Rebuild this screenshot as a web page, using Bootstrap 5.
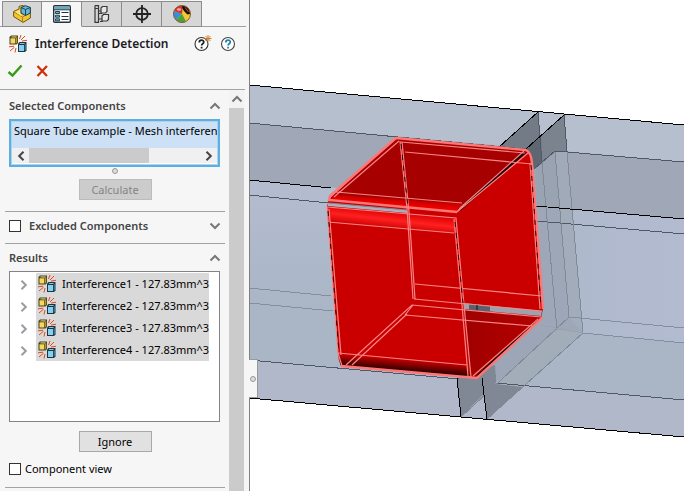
<!DOCTYPE html>
<html lang="en">
<head>
<meta charset="utf-8">
<meta name="viewport" content="width=device-width, initial-scale=1">
<title>Interference Detection</title>
<link href="https://cdn.jsdelivr.net/npm/bootstrap@5.3.0/dist/css/bootstrap.min.css" rel="stylesheet">
<style>
body{font:11px/16px "Noto Sans","Open Sans",sans-serif;color:#000;background:#fff}
svg{display:block}
button{font:inherit;color:inherit}
h1,h2{font-size:11px;line-height:16px;font-weight:600;margin:0}
h1{font-size:12px;color:#1c1c24}
h2{color:#444}
.pm{width:250px;background:#f6f6f6;border-right:1px solid #808080}
.pm-tabs{padding:1px 0 0 2px;box-shadow:inset 0 -1px #a0a0a0;margin-right:3px}
.pm-tab{width:40px;height:26px;background:#d6d6d6;border:1px solid #8c8c8c;border-left-width:0;padding:0}
.pm-tab:first-child{border-left-width:1px}
.pm-tab.on{background:#f6f6f6;border-bottom-color:#f6f6f6}
.plain{background:none;border:0;padding:0}
.pm-title{height:34px;padding:0 13px 0 9px}
.pm-ok{height:28px;padding:0 7px 8px;gap:12px}
.pm-line{border-top:1px solid #a3a3a3}
.pm-body{min-width:0}
.sec{margin:0 4px 0 5px;padding:0 4px;border-bottom:1px solid #a3a3a3}
.sec-head{height:27px}
.sec-first{padding-bottom:11px}
.sec-first .sec-head{height:29px;padding-top:3px}
.sec-last{padding-bottom:10px}
.selbox{border:2px solid #5eaee0;outline:1px solid #a8d6f2;outline-offset:-3px;background:#fff;height:48px;padding:1px;margin-right:1px}
.seltext{background:#cce1f5;height:26px;line-height:18px;white-space:nowrap;overflow:hidden;padding-left:2px}
.hbar{height:15px;background:#f0f0f0;color:#444}
.hbar button{width:17px}
.hthumb{width:120px;background:#cbcbcb}
.grip{width:6px;height:6px;border:1px solid #999;background:#ddd;border-radius:50%}
.grip-row{margin:1px auto 5px}
.cmd{display:block;margin:0 auto;width:73px;height:21px;line-height:17px;border:1px solid #a8a8a8;background:#e1e1e1;padding:0}
.cmd:disabled{background:#ccc;border-color:#bcbcbc;color:#858585}
.cmd-last{margin-bottom:9px}
.tick{appearance:none;width:12px;height:12px;border:1px solid #333;background:#fff;margin:0;border-radius:0}
.tick:checked{background:#2779b8}
.tree{height:151px;border:1px solid #83838b;background:#fff;padding:1px 10px 0;margin:0 1px 9px 0}
.tree li{height:22px}
.tree button{width:16px;margin-top:2px;flex-shrink:0}
.node{background:#d9d9d9;height:22px;padding-left:2px;gap:6px;flex:1}
.vbar{width:15px;background:#cbcbcb;margin-right:5px;flex-shrink:0}
.vbar button{height:18px;background:#f3f3f3}
.handle{left:-1px;top:359px;width:9px;height:39px;background:#f6f6f6;border:1px solid #999;border-left:0;padding:0}
.scene{min-width:0}
</style>
<script src="https://cdn.jsdelivr.net/npm/bootstrap@5.3.0/dist/js/bootstrap.bundle.min.js"></script>
</head>
<body>
<svg width="0" height="0" class="position-absolute" aria-hidden="true">
<defs>
<symbol id="clash" viewBox="0 0 18 18">
<path d="M.5 2 2 .5H9V8L7.5 9.5H.5Z" fill="#4a3f18"/><path d="M1.5 3.3H6.3V8.5H1.5Z" fill="#f6d75e"/><path d="M2 2.3 2.8 1.5H7.8L7 2.4Z" fill="#fff0a0"/><path d="M7.2 3 8.2 2.1V7.5L7.2 8.4Z" fill="#d9ac2f"/>
<path d="M9 8.5 10.5 7H17.5V15.5L16 17H9Z" fill="#173746"/><path d="M10 10H15V16H10Z" fill="#86d0ee"/><path d="M10.5 9 11.3 8.2H16L15.2 9Z" fill="#c4edfb"/><path d="M15.8 9.7 16.6 9V15L15.8 15.8Z" fill="#4c9fc0"/>
<path d="M10.5 4 12 0M12 5 16 1M13 6 18 5.3M0 11.8 5 11.2M1 16 5.5 12.2M6 17.5 7 13" stroke="#dc4b25" fill="none"/>
</symbol>
<symbol id="up" viewBox="0 0 12 8"><path d="M1.5 6.5 6 2 10.5 6.5" fill="none" stroke="#777" stroke-width="2"/></symbol>
<symbol id="right" viewBox="0 0 8 12"><path d="M1.5 1.8 5.8 6 1.5 10.2" fill="none" stroke="currentColor" stroke-width="2"/></symbol>
</defs>
</svg>
<div class="d-flex min-vh-100">
<aside class="pm d-flex flex-column flex-shrink-0">
<nav class="pm-tabs d-flex" aria-label="Manager tabs">
<button class="pm-tab d-flex align-items-center justify-content-center" aria-label="Feature tree"><svg width="18" height="18" viewBox="0 0 18 18"><path d="M.6 6.5 6 4V1.5L9 .5 17.4 3V13L10 17.4.6 11.5Z" fill="#f0c530" stroke="#71581a"/><path d="M1 7 9.5 12V17M9.5 12 17 8" fill="none" stroke="#a8841c"/><path d="M2 6.8 7 4.7V8.5L9.5 11 8 11Z" fill="#ffe579"/><path d="M8 2.5 12.5.7 17.3 2.5V8L12.5 10.5 8 8Z" fill="#68b5d6" stroke="#174558"/><path d="M8 2.5 12.5 4.5 17.3 2.5M12.5 4.5V10" stroke="#174558" fill="none"/></svg></button>
<button class="pm-tab on d-flex align-items-center justify-content-center" aria-label="Properties"><svg width="18" height="18" viewBox="0 0 18 18"><rect x=".7" y=".7" width="16.6" height="16.6" rx="1" fill="#fff" stroke="#26333b" stroke-width="1.4"/><path d="M1.4 1.4H16.6V4.5H1.4Z" fill="#68a7c3"/><path d="M1 4.8H17" stroke="#26333b"/><path d="M2.5 6.5H6.5V8.5H2.5ZM2.5 10.2H6.5V12.2H2.5ZM2.5 13.8H6.5V15.8H2.5Z" fill="#5bbbe1" stroke="#26424d"/><path d="M8.5 7.5H15.5M8.5 11.5H15.5M8.5 14.5H15.5" stroke="#26333b"/></svg></button>
<button class="pm-tab d-flex align-items-center justify-content-center" aria-label="Configurations"><svg width="16" height="18" viewBox="0 0 16 18" fill="none" stroke="#383838" stroke-width="1.2"><path d="M1 .6H4.5V17.4H1V.6M1 3.5H4.5M4.5 6H7M4.5 14H8"/><path d="M7 3 8.5 1.5H13V6.5L11.5 8H7ZM8 11 9.5 9.5H14.5V14.5L13 16H8Z" fill="#e6e6e6"/><path d="M5 8.5H8M6 16.5H9"/></svg></button>
<button class="pm-tab d-flex align-items-center justify-content-center" aria-label="Dimensions"><svg width="18" height="18" viewBox="0 0 18 18" fill="none" stroke="#222" stroke-width="1.8"><circle cx="9" cy="9" r="5.8"/><path d="M9 0V18M0 9H18"/></svg></button>
<button class="pm-tab d-flex align-items-center justify-content-center" aria-label="Appearances"><svg width="18" height="18" viewBox="0 0 18 18"><circle cx="9" cy="9" r="8.5" fill="#f2c934"/><path d="M9 9 1 6A8.5 8.5 0 0 1 10 .5Z" fill="#d9302c"/><path d="M9 9 1 6A8.5 8.5 0 0 0 3 15Z" fill="#348fdd"/><path d="M9 9 3 15A8.5 8.5 0 0 0 13 16.5Z" fill="#49a33d"/><path d="M9 1 12 1Q17 3 17 9L14.5 9.5Q9 5 9 1Z" fill="#111"/><path d="M12 2.5 15.5 7" stroke="#b5423a" stroke-width="1.2"/><ellipse cx="6" cy="4.5" rx="2.3" ry="1.3" fill="#fff" opacity=".6"/><circle cx="9" cy="9" r="8.5" fill="none" stroke="#8a5a3b"/></svg></button>
</nav>
<header class="pm-title d-flex align-items-center">
<svg width="18" height="18" class="me-2 flex-shrink-0"><use href="#clash"/></svg><h1 class="me-auto text-nowrap">Interference Detection</h1>
<button class="plain me-2" aria-label="What's new"><svg width="18" height="18" viewBox="0 0 18 18"><circle cx="7.5" cy="9" r="6.5" fill="#fff" stroke="#333" stroke-width="1.1"/><path d="M5.3 7.4C5.3 4.5 9.8 4.4 9.8 7.1 9.8 8.8 7.6 8.8 7.6 10.5M7.6 11.7V13.4" fill="none" stroke="#222" stroke-width="1.8"/><path d="M14 0V7M10.5 3.5H17.5M11.5 1 16.5 6M16.5 1 11.5 6" stroke="#ce812f"/></svg></button>
<button class="plain" aria-label="Help"><svg width="16" height="18" viewBox="0 0 16 18"><circle cx="8" cy="9" r="6.5" fill="#fff" stroke="#444" stroke-width="1.1"/><path d="M5.8 7.4C5.8 4.5 10.3 4.4 10.3 7.1 10.3 8.8 8.1 8.8 8.1 10.5M8.1 11.7V13.4" fill="none" stroke="#2380ad" stroke-width="1.8"/></svg></button>
</header>
<div class="pm-ok d-flex align-items-center">
<button class="plain" aria-label="OK"><svg width="16" height="14" viewBox="0 0 16 14"><path d="M1.5 8 5.5 11.5 14.5 1.5" fill="none" stroke="#3a9a19" stroke-width="2.4"/></svg></button>
<button class="plain" aria-label="Cancel"><svg width="14" height="14" viewBox="0 0 14 14"><path d="M2.5 2 12 12M12 2 2.5 12" stroke="#cc2f0c" stroke-width="2.2"/></svg></button>
</div>
<div class="pm-line me-1"></div>
<div class="d-flex flex-grow-1">
<div class="pm-body flex-grow-1">
<section class="sec sec-first">
<div class="sec-head d-flex align-items-center justify-content-between"><h2>Selected Components</h2><button class="plain" aria-label="Collapse Selected Components"><svg width="12" height="8"><use href="#up"/></svg></button></div>
<div class="selbox"><div class="seltext">Square Tube example - Mesh interference</div>
<div class="hbar d-flex"><button class="plain d-flex align-items-center justify-content-center" aria-label="Scroll left"><svg width="8" height="12"><use href="#right" transform="rotate(180 4 6)"/></svg></button><span class="hthumb me-auto"></span><button class="plain d-flex align-items-center justify-content-center" aria-label="Scroll right"><svg width="8" height="12"><use href="#right"/></svg></button></div></div>
<div class="grip grip-row"></div>
<button class="cmd" disabled>Calculate</button>
</section>
<section class="sec pb-1">
<div class="sec-head d-flex align-items-center"><input class="tick me-2" type="checkbox" id="excl"><h2 class="me-auto"><label for="excl">Excluded Components</label></h2><button class="plain" aria-label="Expand Excluded Components"><svg width="12" height="8"><use href="#up" transform="rotate(180 6 4)"/></svg></button></div>
</section>
<section class="sec sec-last">
<div class="sec-head d-flex align-items-center justify-content-between"><h2>Results</h2><button class="plain" aria-label="Collapse Results"><svg width="12" height="8"><use href="#up"/></svg></button></div>
<ul class="tree list-unstyled">
<li class="d-flex"><button class="plain text-secondary" aria-label="Expand Interference1"><svg width="8" height="12" opacity=".7"><use href="#right"/></svg></button><span class="node d-flex align-items-center text-nowrap"><svg class="flex-shrink-0" width="18" height="18"><use href="#clash"/></svg>Interference1 - 127.83mm^3</span></li>
<li class="d-flex"><button class="plain text-secondary" aria-label="Expand Interference2"><svg width="8" height="12" opacity=".7"><use href="#right"/></svg></button><span class="node d-flex align-items-center text-nowrap"><svg class="flex-shrink-0" width="18" height="18"><use href="#clash"/></svg>Interference2 - 127.83mm^3</span></li>
<li class="d-flex"><button class="plain text-secondary" aria-label="Expand Interference3"><svg width="8" height="12" opacity=".7"><use href="#right"/></svg></button><span class="node d-flex align-items-center text-nowrap"><svg class="flex-shrink-0" width="18" height="18"><use href="#clash"/></svg>Interference3 - 127.83mm^3</span></li>
<li class="d-flex"><button class="plain text-secondary" aria-label="Expand Interference4"><svg width="8" height="12" opacity=".7"><use href="#right"/></svg></button><span class="node d-flex align-items-center text-nowrap"><svg class="flex-shrink-0" width="18" height="18"><use href="#clash"/></svg>Interference4 - 127.83mm^3</span></li>
</ul>
<button class="cmd cmd-last">Ignore</button>
<div class="d-flex align-items-center gap-1"><input class="tick" type="checkbox" id="compview"><label for="compview">Component view</label></div>
</section>
</div>
<div class="vbar"><button class="plain w-100 d-flex align-items-center justify-content-center" aria-label="Scroll up"><svg width="12" height="8"><use href="#up"/></svg></button></div>
</div>
</aside>
<main class="scene flex-grow-1 position-relative">
<svg class="w-100 h-auto" viewBox="250 0 434 491" role="img" aria-label="Square tube with interference volume">
<defs>
<linearGradient id="wall" x2="0" y2="1"><stop stop-color="#b3bdcf"/><stop offset="1" stop-color="#a9b4c5"/></linearGradient>
<linearGradient id="wallR"><stop stop-color="#adb7c9"/><stop offset="1" stop-color="#b2bbd0"/></linearGradient>
<linearGradient id="topR" gradientUnits="userSpaceOnUse" x1="395" y1="195" x2="394" y2="208"><stop stop-color="#a80000"/><stop offset=".8" stop-color="#f20000"/></linearGradient>
<linearGradient id="bandR" gradientUnits="userSpaceOnUse" x1="392" y1="211" x2="390" y2="229"><stop stop-color="#dc0000"/><stop offset=".5" stop-color="#ff2020"/><stop offset="1" stop-color="#ca0000"/></linearGradient>
<linearGradient id="botR" gradientUnits="userSpaceOnUse" x1="400" y1="359" x2="399" y2="371"><stop stop-color="#c80000"/><stop offset="1" stop-color="#250000"/></linearGradient>
<linearGradient id="floorR"><stop stop-color="#a00000"/><stop offset="1" stop-color="#b50000"/></linearGradient>
</defs>
<path d="M249 85 684 125V437L249 398Z" fill="#b6bfce"/>
<path d="M249 123 684 162V219L249 180Z" fill="#a0a7b7"/>
<path d="M249 180 500 203V326L249 303Z" fill="url(#wall)"/>
<path d="M500 203 684 219V343L500 326Z" fill="url(#wallR)"/>
<path d="M249 303 684 343V400L249 360Z" fill="#aab5c6"/>
<path d="M249 360 684 400V437L249 398Z" fill="#b0b8ca"/>
<!-- tube end walls -->
<path d="M535 168 555 151 567 152 583 333 523 387 496 383 460 380 542 310Z" fill="#98a2b0" opacity=".75"/>
<path d="M555 152 567 152 583 333 569 317Z" fill="#a6b1be" opacity=".5"/>
<path d="M499 147 538 112 542 163 533 169 526 150Z" fill="#737b86"/>
<path d="M526 149 564 115 567 152H555L535 169Z" fill="#7b838f"/>
<path d="M526 149 541 136 542 163 534 169Z" fill="#5e6672"/>
<path d="M538 112 564 115 541 136Z" fill="#b8c0cf"/>
<path d="M457 378 495 365 496 383 461 417Z" fill="#818895"/>
<path d="M482 378 496 384 523 387 487 419Z" fill="#818895"/>
<path d="M484 394 461 417 487 419Z" fill="#b0b8ca"/>
<path d="M496 383 557 330 583 333 523 387Z" fill="#a3adba"/>
<g fill="none" stroke="#4e5866" shape-rendering="crispEdges">
<path d="M249 123 526 149M555 151 684 162M249 195 329 203M537 221 684 234M249 360 459 379M496 383 684 400"/>
<path d="M249 288 331 296M249 303 333 311M569 317 684 328M583 333 684 343" stroke="#838e9e"/>
<path d="M542 163 557 330M496 383 494 365M555 152 569 317 461 417M567 152 583 333 487 419" stroke="#7f8a97"/>
<path d="M540 325 583 333" stroke="#98a3b1"/>
<path d="M534 169 555 151H567L564 115M538 112 542 163"/>
</g>
<path d="M249 85 684 125M249 180 331 188M536 206 684 219M249 398 684 437M499 147 538 112M526 149 564 115M457 378 461 417M482 378 487 419" fill="none" stroke="#000" shape-rendering="crispEdges"/>
<!-- interference solid -->
<path d="M396 138 526 150Q532 152 532 163L543 309 541 318 477 378 341 366Q338 360 338 353L327 207 329 199Z" fill="#ca0000"/>
<path d="M396 138 526 150 457 212 329 200Z" fill="#a60000"/>
<path d="M336 195 465 204 457 212 329 200Z" fill="url(#topR)"/>
<path d="M328 203 407 210V213L328 206Z" fill="#a9b1bf"/>
<path d="M327 207 456 218V233L328 222Z" fill="url(#bandR)"/>
<path d="M464 309 541 317 477 378 470 376Z" fill="url(#floorR)"/>
<path d="M338 353 467 365 470 377 341 366Z" fill="url(#botR)"/>
<path d="M464 303 542 311 541 316 464 309Z" fill="#9aa4b1"/>
<path d="M469 304 490 306V312L469 310Z" fill="#59616c"/>
<path d="M525 152 459 210M538 320 478 376" fill="none" stroke="#200000" stroke-width="3"/>
<g fill="none" stroke="#f88484" stroke-width="1.2">
<path d="M396 138 526 150Q531 152 532 163L543 309M396 138 330 196 329 200 457 212M341 366 477 378 542 318" stroke="#ff7676" stroke-width="2.4"/>
<path d="M399 141 334 197M336 192 462 203M524 151 460 208 457 212 528 153M401 142 525 153M405 152 532 164"/>
<path d="M400 141 407 208 413 299M402 142 409 212 415 299M415 284 542 296M414 299 542 311"/>
<path d="M327 207 456 218 464 305 471 377M328 222 454 233M454 219 462 305 468 376"/>
<path d="M327 207 338 353 342 366M329 209 341 355M530 163 540 309"/>
<path d="M346 365 412 305 541 317M352 365 407 314M405 315 532 326M405 315 413 305M338 353 467 365M538 319 473 376"/>
</g>
<path d="M531 165 541 307M455 222 463 303M328 211 339 353M401 144 408 207" fill="none" stroke="#300000" stroke-width="1" stroke-dasharray="5 6"/>
<path d="M329 203 407 210" stroke="#7d8794" fill="none"/>
<path d="M477 305V310" stroke="#111"/>
</svg>
<button class="handle position-absolute d-flex align-items-center justify-content-center" aria-label="Collapse panel"><span class="grip"></span></button>
</main>
</div>
</body>
</html>
